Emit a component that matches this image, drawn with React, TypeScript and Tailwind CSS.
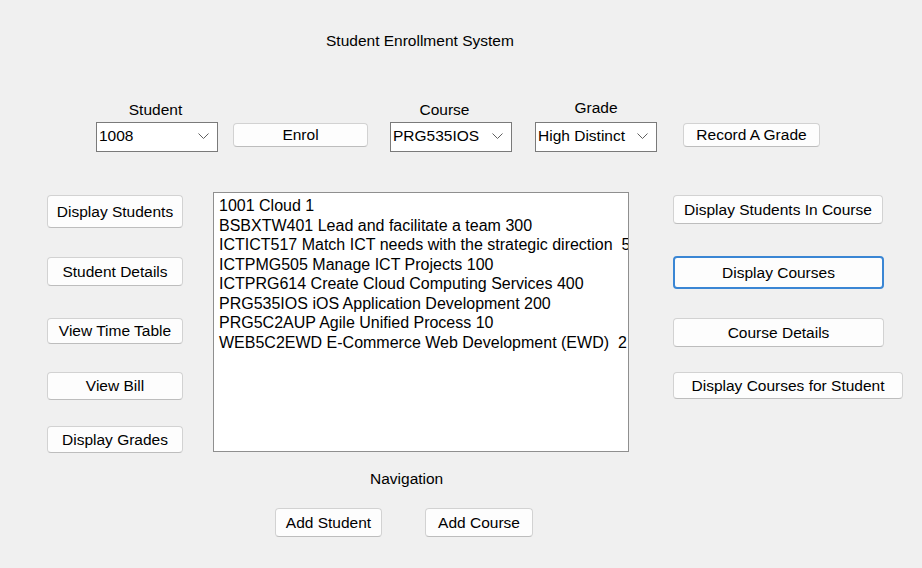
const leftButtons = [
  { label: "Display Students", cls: "mt-[3px] h-[33px]" },
  { label: "Student Details", cls: "mt-[29px] h-[29px]" },
  { label: "View Time Table", cls: "mt-[32px] h-[26px]" },
  { label: "View Bill", cls: "mt-[28px] h-[28px]" },
  { label: "Display Grades", cls: "mt-[26px] h-[27px]" },
];

const rightButtons = [
  { label: "Display Students In Course", cls: "mt-[3px] h-[29px] w-[210px]" },
  { label: "Display Courses", cls: "mt-[32px] h-[33px] w-[211px]", focused: true },
  { label: "Course Details", cls: "mt-[29px] h-[29px] w-[211px]" },
  { label: "Display Courses for Student", cls: "mt-[25px] h-[27px] w-[230px]" },
];

const courses = [
  "1001 Cloud 1",
  "BSBXTW401 Lead and facilitate a team 300",
  "ICTICT517 Match ICT needs with the strategic direction  5",
  "ICTPMG505 Manage ICT Projects 100",
  "ICTPRG614 Create Cloud Computing Services 400",
  "PRG535IOS iOS Application Development 200",
  "PRG5C2AUP Agile Unified Process 10",
  "WEB5C2EWD E-Commerce Web Development (EWD)  2",
];

function Button({ label, className, focused }: { label: string; className: string; focused?: boolean }) {
  return (
    <button
      type="button"
      className={`flex shrink-0 items-center justify-center whitespace-nowrap rounded-[4px] bg-[#fdfdfd] leading-none text-black ${
        focused
          ? "border-2 border-[#3a86d4]"
          : "border border-[#d2d2d2] border-b-[#bdbdbd]"
      } ${className}`}
    >
      {label}
    </button>
  );
}

function Combo({ value }: { value: string }) {
  return (
    <div className="flex h-[30px] w-[122px] items-center border border-[#7a7a7a] bg-white pb-[2px]">
      <span className="flex-1 overflow-hidden whitespace-nowrap pl-[2px]">{value}</span>
      <svg width="11" height="6" viewBox="0 0 11 6" className="mr-[8px] ml-[4px] shrink-0">
        <polyline points="0.5,0.5 5.5,5.5 10.5,0.5" fill="none" stroke="#606060" strokeWidth="1" />
      </svg>
    </div>
  );
}

export default function App() {
  return (
    <div className="h-[568px] w-[922px] overflow-hidden bg-[#f0f0f0] font-['Liberation_Sans',Arial,sans-serif] text-[15.5px] leading-[20px] text-black">
      <div className="ml-[326px] pt-[31px]">Student Enrollment System</div>

      <div className="mt-[49px] flex items-end pl-[96px]">
        <div className="flex w-[122px] flex-col items-center">
          <div className="mb-[2px] pr-[3px]">Student</div>
          <Combo value="1008" />
        </div>
        <Button label="Enrol" className="mb-[5px] ml-[15px] h-[24px] w-[135px]" />
        <div className="ml-[22px] flex w-[122px] flex-col items-center">
          <div className="mb-[2px] pr-[13px]">Course</div>
          <Combo value="PRG535IOS" />
        </div>
        <div className="ml-[23px] flex w-[122px] flex-col items-center">
          <div className="-mt-[2px] mb-[4px]">Grade</div>
          <Combo value="High Distinct" />
        </div>
        <Button label="Record A Grade" className="mb-[5px] ml-[26px] h-[24px] w-[137px]" />
      </div>

      <div className="mt-[40px] flex items-start pl-[47px]">
        <div className="flex w-[136px] flex-col">
          {leftButtons.map((b) => (
            <Button key={b.label} label={b.label} className={`w-[136px] ${b.cls}`} />
          ))}
        </div>
        <div className="ml-[30px] h-[260px] w-[416px] overflow-hidden border border-[#8f8f8f] bg-white pt-[3px] pl-[5px] text-[16px] leading-[19.5px]">
          {courses.map((c) => (
            <div key={c} className="whitespace-pre">
              {c}
            </div>
          ))}
        </div>
        <div className="ml-[44px] flex flex-col items-start">
          {rightButtons.map((b) => (
            <Button key={b.label} label={b.label} className={b.cls} focused={b.focused} />
          ))}
        </div>
      </div>

      <div className="ml-[370px] mt-[16px]">Navigation</div>

      <div className="mt-[19px] flex pl-[275px]">
        <Button label="Add Student" className="h-[29px] w-[107px]" />
        <Button label="Add Course" className="ml-[43px] h-[29px] w-[108px]" />
      </div>
    </div>
  );
}
